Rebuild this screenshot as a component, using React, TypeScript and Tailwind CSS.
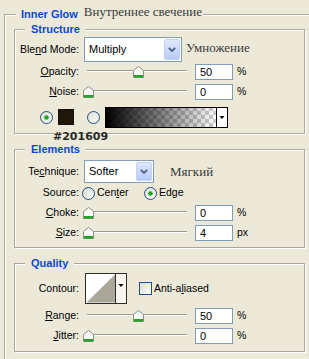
import React from "react";

const label = "w-[64px] shrink-0 text-right";

function Mn({ pre = "", u, post = "" }: { pre?: string; u: string; post?: string }) {
  return (
    <span>
      {pre}
      <span className="underline underline-offset-[1px]">{u}</span>
      {post}
    </span>
  );
}

function Group({
  title,
  className = "",
  children,
}: {
  title: string;
  className?: string;
  children: React.ReactNode;
}) {
  return (
    <div
      className={`relative w-[291px] border border-[#aca899] shadow-[inset_1px_1px_0_#fff,1px_1px_0_#fff] ${className}`}
    >
      <span className="absolute left-[10px] top-[-6px] bg-[#ece9d8] px-[6px] text-[11px] font-bold leading-[11px] text-[#0b48d1]">
        {title}
      </span>
      {children}
    </div>
  );
}

function Chevron() {
  return (
    <svg width="8" height="5" viewBox="0 0 8 5">
      <path d="M0.8 0.8 L4 4 L7.2 0.8" fill="none" stroke="#4d6185" strokeWidth="1.8" />
    </svg>
  );
}

function Select({ value, w, h }: { value: string; w: string; h: string }) {
  return (
    <div className={`flex ${w} ${h} items-center border border-[#7f9db9] bg-white p-[1px]`}>
      <span className="flex-1 pl-[3px] text-[11px]">{value}</span>
      <div className="flex h-full w-[16px] items-center justify-center rounded-[2px] border border-[#c0d1fb] bg-gradient-to-b from-[#dfe8fd] to-[#b7cbf6]">
        <Chevron />
      </div>
    </div>
  );
}

function Thumb() {
  return (
    <svg width="11" height="12" viewBox="0 0 11 12">
      <path d="M0.5 4.5 L5.5 0.5 L10.5 4.5 V11.5 H0.5 Z" fill="#fbfbf9" stroke="#8d8d86" />
      <rect x="1" y="9" width="9" height="2.5" fill="#22a526" />
    </svg>
  );
}

function Slider({ pct }: { pct: number }) {
  return (
    <div className="relative ml-[8px] flex h-[20px] w-[100px] items-center">
      <div className="mt-[-2px] h-[2px] w-full border-t border-[#9c9b92] bg-white" />
      <div className="absolute top-[4px]" style={{ left: pct - 5 }}>
        <Thumb />
      </div>
    </div>
  );
}

function Num({ value, unit }: { value: string; unit: string }) {
  return (
    <>
      <div className="ml-[8px] h-[16px] w-[38px] border border-[#7f9db9] bg-white pl-[4px] text-[11px] leading-[14px]">
        {value}
      </div>
      <span className="ml-[4px]">{unit}</span>
    </>
  );
}

function SliderRow({
  children,
  pct,
  value,
  unit = "%",
}: {
  children: React.ReactNode;
  pct: number;
  value: string;
  unit?: string;
}) {
  return (
    <div className="flex h-[20px] items-center">
      <div className={label}>{children}</div>
      <Slider pct={pct} />
      <Num value={value} unit={unit} />
    </div>
  );
}

function Radio({ checked }: { checked?: boolean }) {
  return (
    <svg width="13" height="13" viewBox="0 0 13 13" className="shrink-0">
      <defs>
        <linearGradient id="rg" x1="0" y1="0" x2="1" y2="1">
          <stop offset="0" stopColor="#dcdcd4" />
          <stop offset="1" stopColor="#ffffff" />
        </linearGradient>
      </defs>
      <circle cx="6.5" cy="6.5" r="6" fill="url(#rg)" stroke="#1c5180" />
      {checked && <circle cx="6.5" cy="6.5" r="2.3" fill="#21a121" />}
    </svg>
  );
}

function GradientPreview() {
  return (
    <svg width="123" height="21" viewBox="0 0 123 21" className="shrink-0">
      <defs>
        <pattern id="chk" width="8" height="8" patternUnits="userSpaceOnUse">
          <rect width="8" height="8" fill="#ffffff" />
          <rect width="4" height="4" fill="#cccccc" />
          <rect x="4" y="4" width="4" height="4" fill="#cccccc" />
        </pattern>
        <linearGradient id="fade" x1="0" y1="0" x2="1" y2="0">
          <stop offset="0" stopColor="#000" stopOpacity="1" />
          <stop offset="1" stopColor="#000" stopOpacity="0" />
        </linearGradient>
      </defs>
      <rect x="0.5" y="0.5" width="122" height="20" fill="#fff" stroke="#000" />
      <rect x="1" y="1" width="110" height="19" fill="url(#chk)" />
      <rect x="1" y="1" width="110" height="19" fill="url(#fade)" />
      <line x1="111.5" y1="1" x2="111.5" y2="20" stroke="#000" />
      <path d="M114.5 9 H119.5 L117 12 Z" fill="#000" />
    </svg>
  );
}

function ContourPreview() {
  return (
    <svg width="42" height="31" viewBox="0 0 42 31" className="shrink-0">
      <rect x="0.5" y="0.5" width="41" height="30" fill="#fff" stroke="#2c2c2c" />
      <path d="M1.5 29.5 L30 1.5 V29.5 Z" fill="#aaa699" />
      <rect x="31" y="1" width="10" height="29" fill="#f6f5f0" />
      <line x1="30.5" y1="1" x2="30.5" y2="30" stroke="#2c2c2c" />
      <path d="M33.5 11 H38.5 L36 14 Z" fill="#000" />
    </svg>
  );
}

export default function App() {
  return (
    <div className="h-[359px] w-[309px] overflow-hidden bg-[#ece9d8] font-['Liberation_Sans',Arial,sans-serif] text-[10.5px] text-black">
      <div className="relative ml-[4px] mt-[14px] h-[400px] w-[330px] border-l border-t border-[#aca899] pl-[9px] pt-[14px] shadow-[inset_1px_1px_0_#fff]">
        <div className="absolute left-[11px] top-[-7px] flex items-start">
          <span className="bg-[#ece9d8] pl-[5px] pr-[6px] text-[11px] font-bold leading-[13px] text-[#0b48d1]">
            Inner Glow
          </span>
          <span className="-mt-[4px] bg-[#ece9d8] pr-[1px] font-['Liberation_Serif',serif] text-[13px] leading-[15px] text-[#3a3a3a]">
            Внутреннее свечение
          </span>
        </div>

        {/* Structure */}
        <Group title="Structure" className="pb-[5px] pt-[7px]">
          <div className="flex h-[25px] items-center">
            <div className={label}>
              <Mn pre="Ble" u="n" post="d Mode:" />
            </div>
            <div className="ml-[5px]">
              <Select value="Multiply" w="w-[98px]" h="h-[25px]" />
            </div>
            <span className="ml-[4px] -mt-[4px] font-['Liberation_Serif',serif] text-[13px] text-[#3a3a3a]">
              Умножение
            </span>
          </div>
          <SliderRow pct={51} value="50">
            <Mn u="O" post="pacity:" />
          </SliderRow>
          <SliderRow pct={1} value="0">
            <Mn u="N" post="oise:" />
          </SliderRow>
          <div className="mt-[4px] flex h-[22px] items-center">
            <div className="ml-[25px]">
              <Radio checked />
            </div>
            <div className="ml-[5px] h-[16px] w-[16px] shrink-0 border border-[#111] bg-[#201609]" />
            <div className="ml-[13px]">
              <Radio />
            </div>
            <div className="ml-[5px]">
              <GradientPreview />
            </div>
          </div>
          <span className="absolute left-[38px] top-[102px] font-['DejaVu_Sans',sans-serif] text-[11px] font-bold leading-[10px] text-[#2a2a2a]">
            #201609
          </span>
        </Group>

        {/* Elements */}
        <Group title="Elements" className="mt-[15px] pb-[4px] pt-[10px]">
          <div className="flex h-[23px] items-center">
            <div className={label}>
              <Mn pre="Te" u="c" post="hnique:" />
            </div>
            <div className="ml-[5px]">
              <Select value="Softer" w="w-[70px]" h="h-[23px]" />
            </div>
            <span className="ml-[16px] font-['Liberation_Serif',serif] text-[13px] text-[#3a3a3a]">
              Мягкий
            </span>
          </div>
          <div className="flex h-[20px] items-center">
            <div className={label}>Source:</div>
            <div className="ml-[3px] flex w-[62px] items-center">
              <Radio />
              <span className="ml-[2px]">
                <Mn pre="Cen" u="t" post="er" />
              </span>
            </div>
            <Radio checked />
            <span className="ml-[2px]">Edge</span>
          </div>
          <SliderRow pct={1} value="0">
            <Mn u="C" post="hoke:" />
          </SliderRow>
          <SliderRow pct={1} value="4" unit="px">
            <Mn u="S" post="ize:" />
          </SliderRow>
        </Group>

        {/* Quality */}
        <Group title="Quality" className="mt-[15px] pb-[5px] pt-[9px]">
          <div className="flex h-[31px] items-center">
            <div className={label}>Contour:</div>
            <div className="ml-[6px]">
              <ContourPreview />
            </div>
            <div className="ml-[12px] h-[13px] w-[13px] shrink-0 border border-[#1c5180] bg-gradient-to-br from-[#dcdcd4] to-white" />
            <span className="ml-[2px]">
              <Mn pre="Anti-a" u="l" post="iased" />
            </span>
          </div>
          <div className="mt-[2px]">
            <SliderRow pct={51} value="50">
              <Mn u="R" post="ange:" />
            </SliderRow>
            <SliderRow pct={1} value="0">
              <Mn u="J" post="itter:" />
            </SliderRow>
          </div>
        </Group>
      </div>
    </div>
  );
}
